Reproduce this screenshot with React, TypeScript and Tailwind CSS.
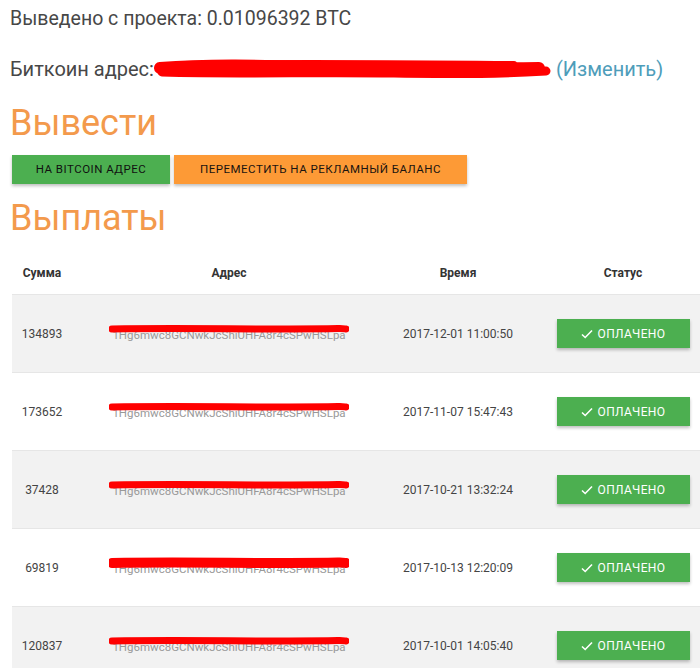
import React from "react";

const payouts = [
  { sum: "134893", addr: "1Hg6mwc8GCNwkJcShiUHFA8r4cSPwHSLpa", time: "2017-12-01 11:00:50" },
  { sum: "173652", addr: "1Hg6mwc8GCNwkJcShiUHFA8r4cSPwHSLpa", time: "2017-11-07 15:47:43" },
  { sum: "37428", addr: "1Hg6mwc8GCNwkJcShiUHFA8r4cSPwHSLpa", time: "2017-10-21 13:32:24" },
  { sum: "69819", addr: "1Hg6mwc8GCNwkJcShiUHFA8r4cSPwHSLpa", time: "2017-10-13 12:20:09" },
  { sum: "120837", addr: "1Hg6mwc8GCNwkJcShiUHFA8r4cSPwHSLpa", time: "2017-10-01 14:05:40" },
];

function TopScribble() {
  return (
    <svg width="400" height="24" viewBox="0 0 400 24" className="shrink-0">
      <path d="M6 11 C60 7 120 9 180 10 S300 12 385 11" stroke="#ff0000" strokeWidth="12" strokeLinecap="round" fill="none" />
      <path d="M8 15 C80 17 160 15 240 16 S340 17 392 14" stroke="#ff0000" strokeWidth="9" strokeLinecap="round" fill="none" />
      <path d="M30 7 C120 5 220 6 360 7" stroke="#ff0000" strokeWidth="6" strokeLinecap="round" fill="none" />
    </svg>
  );
}

function RowScribble({ thick }: { thick: boolean }) {
  return (
    <svg width="240" height="14" viewBox="0 0 240 14" className="absolute left-0 top-[-3px]">
      <path d="M3 7 C60 6 120 7 180 7 S230 6 237 7" stroke="#ff0000" strokeWidth={thick ? 10 : 7} strokeLinecap="round" fill="none" />
    </svg>
  );
}

function Check() {
  return (
    <svg width="12" height="10" viewBox="0 0 12 10" className="shrink-0">
      <path d="M1 5.5 L4.2 8.5 L11 1.5" stroke="#fff" strokeWidth="1.6" fill="none" />
    </svg>
  );
}

export default function App() {
  return (
    <div className="w-[700px] h-[668px] overflow-hidden bg-white font-['Roboto',sans-serif] text-[#474747]">
      <div className="pl-[10px] pt-[7px]">
        <p className="text-[19.5px] leading-[24px]">Выведено с проекта: 0.01096392 BTC</p>
        <div className="mt-[26px] flex items-center text-[20px] leading-[24px]">
          <span>Биткоин адрес:</span>
          <TopScribble />
          <span className="ml-[2px] text-[#4e9dba]">(Изменить)</span>
        </div>

        <h2 className="mt-[22px] text-[36px] leading-[40px] text-[#f39a4c]">Вывести</h2>
        <div className="mt-[12px] ml-[2px] flex gap-[4px]">
          <button className="h-[29px] w-[158px] bg-[#4caf50] text-[11.5px] font-normal uppercase tracking-[0.5px] text-[#111] shadow-[0_2px_3px_rgba(0,0,0,0.25)]">
            На Bitcoin адрес
          </button>
          <button className="h-[29px] w-[293px] bg-[#fd9a36] text-[11.5px] font-normal uppercase tracking-[0.5px] text-[#1a1410] shadow-[0_2px_3px_rgba(0,0,0,0.25)]">
            Переместить на рекламный баланс
          </button>
        </div>

        <h2 className="mt-[14px] text-[36px] leading-[40px] text-[#f39a4c]">Выплаты</h2>

        <div className="mt-[14px] ml-[2px] w-[704px]">
          <div className="grid h-[43px] grid-cols-[60px_314px_144px_186px] items-center border-b border-[#e6e6e6] text-[12px] font-bold text-[#333]">
            <div className="text-center">Сумма</div>
            <div className="text-center">Адрес</div>
            <div className="text-center">Время</div>
            <div className="text-center">Статус</div>
          </div>
          {payouts.map((p, i) => (
            <div
              key={p.sum}
              className={
                "grid h-[78px] grid-cols-[60px_314px_144px_186px] items-center border-b border-[#e6e6e6] text-[12px] text-[#444] " +
                (i % 2 === 0 ? "bg-[#f2f2f2]" : "bg-white")
              }
            >
              <div className="text-center">{p.sum}</div>
              <div className="flex justify-center">
                <div className="relative w-[240px] text-center text-[11.5px] leading-[14px] text-[#999] whitespace-nowrap">
                  <span className="block pt-[3px]">{p.addr}</span>
                  <RowScribble thick={i === 3} />
                </div>
              </div>
              <div className="text-center">{p.time}</div>
              <div className="flex justify-center">
                <div className="flex h-[29px] w-[133px] items-center justify-center gap-[5px] bg-[#4caf50] text-[12px] uppercase tracking-[0.4px] text-white shadow-[0_2px_3px_rgba(0,0,0,0.25)]">
                  <Check />
                  <span>Оплачено</span>
                </div>
              </div>
            </div>
          ))}
        </div>
      </div>
    </div>
  );
}
